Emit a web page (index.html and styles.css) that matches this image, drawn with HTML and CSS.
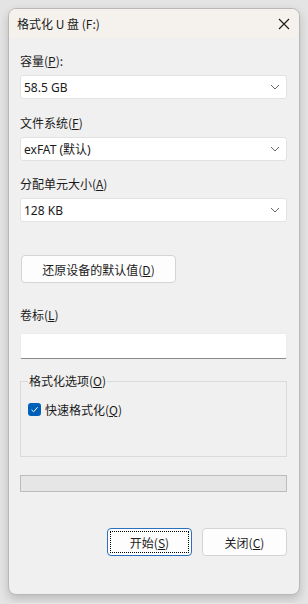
FILE: index.html
```html
<!DOCTYPE html>
<html lang="zh-CN">
<head>
    <meta charset="UTF-8">
    <title>格式化 U 盘 (F:)</title>
    <link rel="stylesheet" href="styles.css">
</head>
<body>
    <div class="janela">
        <div class="titulo">
            <span>格式化 U 盘 (F:)</span>
            <svg class="fechar" width="12" height="12" viewBox="0 0 12 12">
                <path d="M1 1 L11 11 M11 1 L1 11" stroke="#1a1a1a" stroke-width="1.1" fill="none"/>
            </svg>
        </div>
        <div class="conteudo">
            <div class="rotulo primeiro">容量(<u>P</u>):</div>
            <div class="lista">
                <span>58.5 GB</span>
                <svg class="seta" width="10" height="6" viewBox="0 0 10 6"><path d="M1 1 L5 5 L9 1" stroke="#666" stroke-width="1" fill="none"/></svg>
            </div>

            <div class="rotulo segundo">文件系统(<u>F</u>)</div>
            <div class="lista">
                <span>exFAT (默认)</span>
                <svg class="seta" width="10" height="6" viewBox="0 0 10 6"><path d="M1 1 L5 5 L9 1" stroke="#666" stroke-width="1" fill="none"/></svg>
            </div>

            <div class="rotulo terceiro">分配单元大小(<u>A</u>)</div>
            <div class="lista">
                <span>128 KB</span>
                <svg class="seta" width="10" height="6" viewBox="0 0 10 6"><path d="M1 1 L5 5 L9 1" stroke="#666" stroke-width="1" fill="none"/></svg>
            </div>

            <button class="botao restaurar">还原设备的默认值(<u>D</u>)</button>

            <div class="rotulo volume">卷标(<u>L</u>)</div>
            <div class="campo"></div>

            <fieldset class="grupo">
                <legend>格式化选项(<u>O</u>)</legend>
                <div class="opcao">
                    <span class="caixa">
                        <svg width="9" height="9" viewBox="0 0 9 9"><path d="M1.5 4.8 L3.6 6.8 L7.6 2.2" stroke="#fff" stroke-width="1" fill="none"/></svg>
                    </span>
                    <span>快速格式化(<u>Q</u>)</span>
                </div>
            </fieldset>

            <div class="progresso"></div>

            <div class="acoes">
                <button class="botao foco"><span class="pontilhado">开始(<u>S</u>)</span></button>
                <button class="botao">关闭(<u>C</u>)</button>
            </div>
        </div>
    </div>
</body>
</html>
```

FILE: styles.css
```css
* {
    box-sizing: border-box;
}

body {
    margin: 0;
    padding: 8px;
    background-color: #e4e4e4;
    font-family: "Noto Sans", "Noto Sans CJK SC", sans-serif;
    font-size: 12px;
    color: #1a1a1a;
}

.janela {
    width: 292px;
    height: 587px;
    background: #f0f0f0;
    border: 1px solid #b8b8b8;
    border-radius: 8px;
    box-shadow: 0 4px 10px rgba(0, 0, 0, 0.18);
    overflow: hidden;
}

.titulo {
    height: 29px;
    background: #f5f2ed;
    display: flex;
    align-items: center;
    justify-content: space-between;
    padding: 0 9px 0 8px;
    font-family: "Noto Sans CJK SC", sans-serif;
    font-size: 12px;
}

.fechar {
    margin-top: 1px;
}

.conteudo {
    padding: 15px 12px 0 11px;
    display: flex;
    flex-direction: column;
}

.rotulo {
    height: 16px;
    line-height: 16px;
    margin-bottom: 6px;
    font-family: "Noto Sans CJK SC", sans-serif;
}

.segundo {
    margin-top: 16px;
}

.terceiro {
    margin-top: 15px;
}

.lista {
    height: 24px;
    background: #fff;
    border: 1px solid #e2e2e2;
    border-radius: 3px;
    display: flex;
    align-items: center;
    justify-content: space-between;
    padding: 0 6px 0 3px;
    font-family: "Noto Sans", "Noto Sans CJK SC", sans-serif;
}

.botao {
    height: 28px;
    background: #fdfdfd;
    border: 1px solid #d4d4d4;
    border-radius: 4px;
    font-family: "Noto Sans CJK SC", sans-serif;
    font-size: 12px;
    color: #1a1a1a;
    padding: 0;
}

.restaurar {
    width: 155px;
    margin: 33px 0 0 1px;
}

.volume {
    margin-top: 24px;
    margin-bottom: 10px;
}

.campo {
    height: 26px;
    background: #fff;
    border: 1px solid #ececec;
    border-bottom-color: #8a8a8a;
    border-radius: 2px;
}

.grupo {
    margin: 14px 0 0;
    height: 84px;
    border: 1px solid #dadada;
    padding: 0 7px;
    font-family: "Noto Sans CJK SC", sans-serif;
}

.grupo legend {
    padding: 0 1px;
    line-height: 16px;
}

.opcao {
    display: flex;
    align-items: center;
    gap: 4px;
    margin-top: 12px;
}

.caixa {
    width: 13px;
    height: 13px;
    background: #005fb8;
    border-radius: 3px;
    display: flex;
    align-items: center;
    justify-content: center;
}

.progresso {
    margin-top: 18px;
    height: 17px;
    background: #e6e6e6;
    border: 1px solid #bcbcbc;
}

.acoes {
    margin-top: 36px;
    display: flex;
    justify-content: flex-end;
    gap: 10px;
}

.acoes .botao {
    width: 85px;
}

.foco {
    border-color: #2a6fc0;
    padding: 2px;
}

.pontilhado {
    display: flex;
    align-items: center;
    justify-content: center;
    height: 100%;
    border: 1px dotted #000;
}
```
